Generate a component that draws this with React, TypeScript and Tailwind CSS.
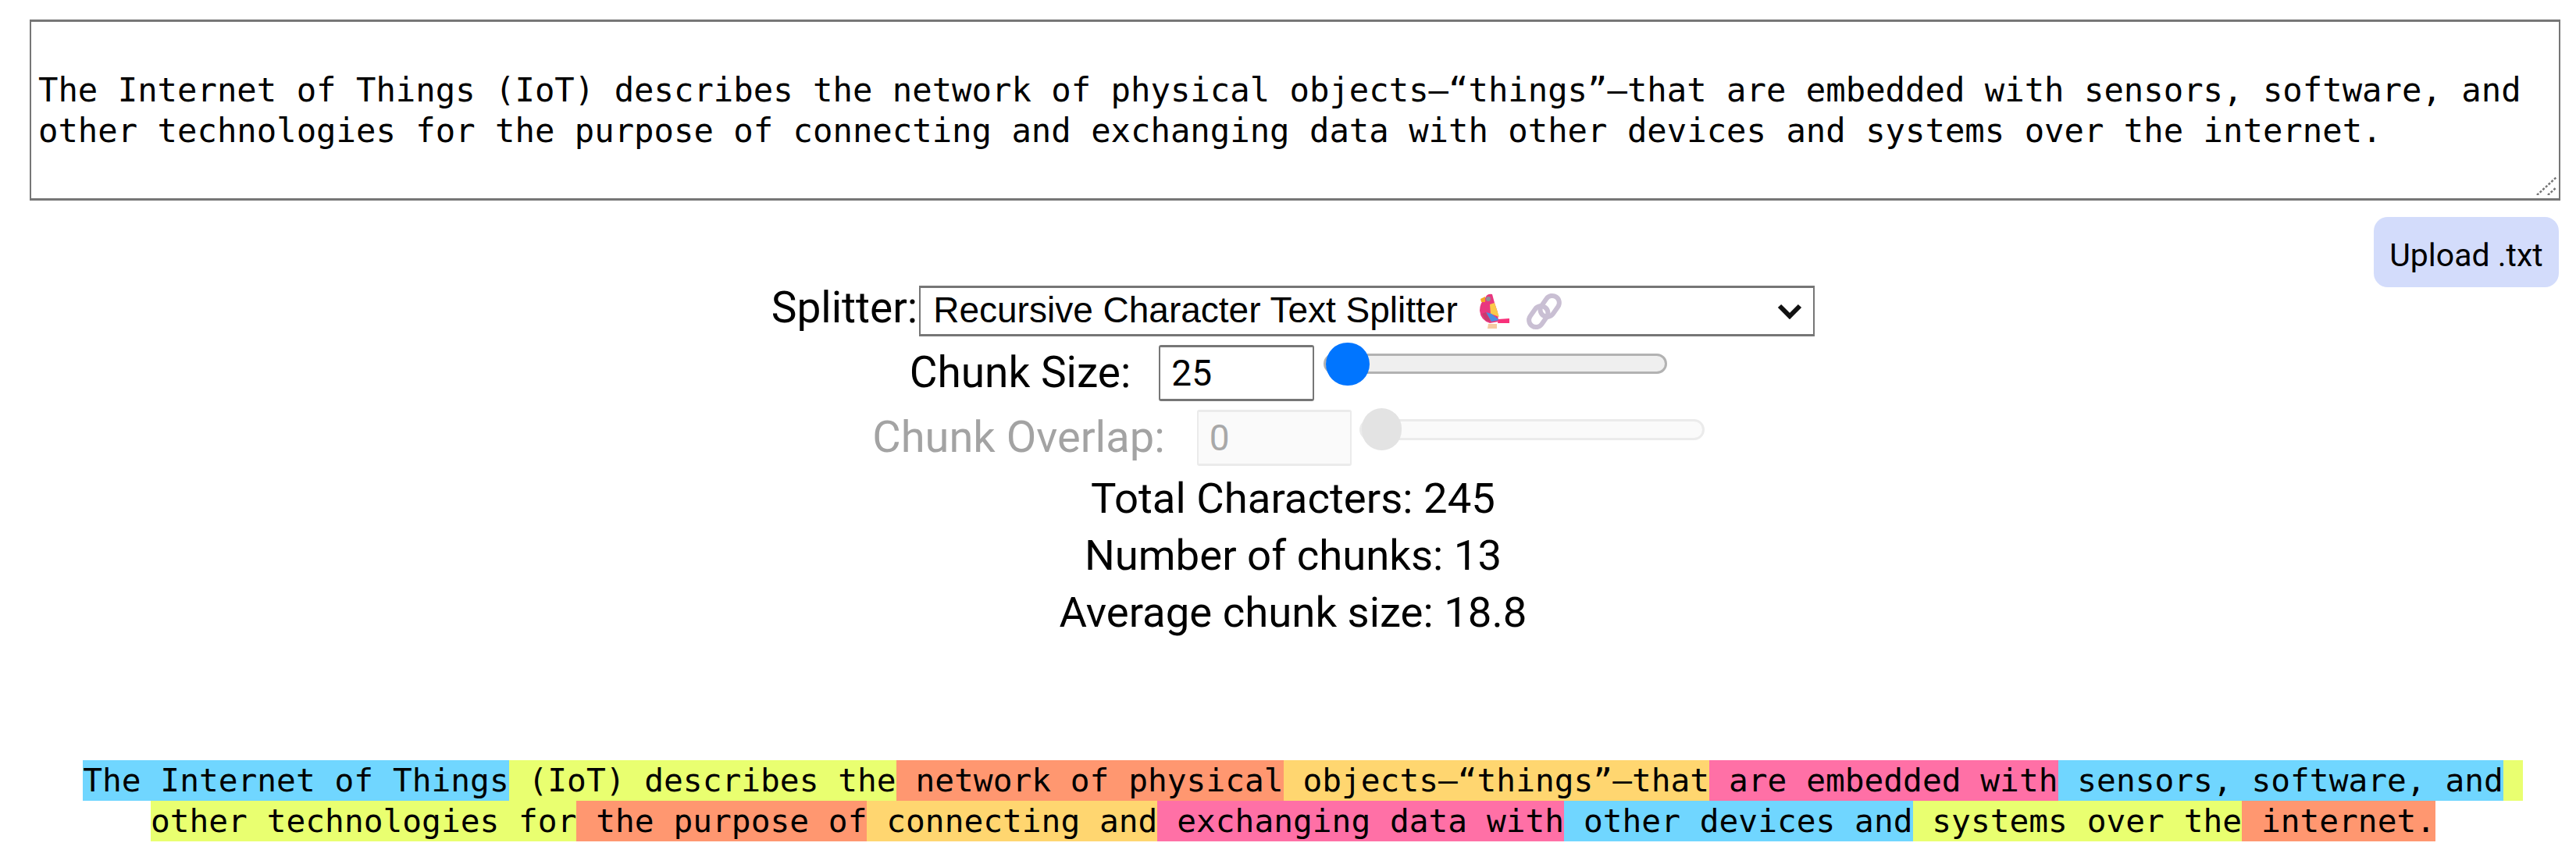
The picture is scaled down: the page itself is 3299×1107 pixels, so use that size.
const text =
  "The Internet of Things (IoT) describes the network of physical objects—“things”—that are embedded with sensors, software, and other technologies for the purpose of connecting and exchanging data with other devices and systems over the internet.";

const chunks: { text: string; color: string }[] = [
  { text: "The Internet of Things", color: "bg-[#70d6ff]" },
  { text: " (IoT) describes the", color: "bg-[#e9ff70]" },
  { text: " network of physical", color: "bg-[#ff9770]" },
  { text: " objects—“things”—that", color: "bg-[#ffd670]" },
  { text: " are embedded with", color: "bg-[#ff70a6]" },
  { text: " sensors, software, and", color: "bg-[#70d6ff]" },
  { text: " other technologies for", color: "bg-[#e9ff70]" },
  { text: " the purpose of", color: "bg-[#ff9770]" },
  { text: " connecting and", color: "bg-[#ffd670]" },
  { text: " exchanging data with", color: "bg-[#ff70a6]" },
  { text: " other devices and", color: "bg-[#70d6ff]" },
  { text: " systems over the", color: "bg-[#e9ff70]" },
  { text: " internet.", color: "bg-[#ff9770]" },
];

function Parrot() {
  return (
    <svg width="39" height="45" viewBox="0 0 39 45" className="ml-[27px] shrink-0">
      <path d="M8 6 Q10 0 17 1 L20 12 L24 24 L25 36 L14 38 Q2 34 1 22 Q1 12 8 6Z" fill="#e8377f" />
      <path d="M2 7 L8 4 L8 11 L3 11Z" fill="#f5a623" />
      <circle cx="12" cy="7" r="3" fill="#8f8f98" />
      <path d="M14 14 L20 12 L26 30 L15 26Z" fill="#fbc94a" />
      <path d="M9 24 L16 26 L26 34 L16 36Z" fill="#4a8fe0" />
      <path d="M4 26 L9 24 L15 36 L8 34Z" fill="#c93a6f" />
      <path d="M25 33 L39 32 L39 38 L24 38Z" fill="#f8317a" />
      <path d="M12 39 L23 39 L23 45 L11 45Z" fill="#f6c9a0" />
    </svg>
  );
}

function LinkEmoji() {
  return (
    <svg width="47" height="48" viewBox="0 0 47 48" fill="none" className="ml-[21px] shrink-0">
      <g stroke="#c9bfd3" strokeWidth="6">
        <rect x="22" y="3" width="18" height="29" rx="9" transform="rotate(35 31 17)" />
        <rect x="7" y="16" width="18" height="29" rx="9" transform="rotate(35 16 31)" />
      </g>
    </svg>
  );
}

function App() {
  const sans = "font-['Roboto',sans-serif]";
  return (
    <div className={`min-h-[1107px] bg-white pl-[33px] pr-[20px] pt-[25px] text-black ${sans}`}>
      <div className="relative ml-[5px]">
        <textarea
          readOnly
          defaultValue={text}
          className="block h-[232px] w-full resize-none border-x-2 border-y-[3px] border-[#767676] bg-white pl-[9px] pr-[9px] pt-[62px] font-['DejaVu_Sans_Mono',monospace] text-[42.25px] leading-[52px] text-black outline-none"
        />
        <svg width="26" height="24" viewBox="0 0 26 24" className="absolute bottom-[7px] right-[5px]">
          <path d="M1 24 L26 1 M15 24 L26 14" stroke="#767676" strokeWidth="2.5" strokeDasharray="3 2" />
        </svg>
      </div>

      <div className="mt-[21px] flex justify-end pr-[2px]">
        <button className="flex h-[90px] w-[237px] items-center justify-center rounded-[18px] bg-[#d3dcfb] pt-[8px] text-[41px] leading-none text-black">
          Upload .txt
        </button>
      </div>

      <div className="flex flex-col items-center">
        <div className="-mt-[2px] flex h-[65px] items-center">
          <label className="pb-[8px] text-[55px] leading-none">Splitter:</label>
          <div className="ml-[2px] flex h-[65px] w-[1147px] items-center border-x-2 border-y-[3px] border-[#767676] bg-white pl-[16px] pr-[14px] font-['Liberation_Sans',sans-serif] text-[46px]">
            <span className="pb-[2px]">Recursive Character Text Splitter</span>
            <Parrot />
            <LinkEmoji />
            <svg width="32" height="21" viewBox="0 0 32 21" fill="none" className="ml-auto">
              <path d="M3 4 L16 17 L29 4" stroke="#111" strokeWidth="6" />
            </svg>
          </div>
        </div>

        <div className="mt-[11px] flex h-[72px] items-center pr-[12px]">
          <label className="pb-[2px] text-[55px] leading-none">Chunk Size:</label>
          <input
            readOnly
            value="25"
            className="ml-[36px] h-[72px] w-[199px] rounded-[3px] border-x-2 border-y-[3px] border-[#767676] bg-white px-[14px] text-[46px] outline-none"
          />
          <input
            type="range"
            min={25}
            max={2000}
            defaultValue={25}
            className="ml-[12px] h-[72px] w-[440px] -translate-y-[12px] cursor-pointer appearance-none bg-transparent [&::-webkit-slider-runnable-track]:h-[26px] [&::-webkit-slider-runnable-track]:rounded-full [&::-webkit-slider-runnable-track]:border-[3px] [&::-webkit-slider-runnable-track]:border-[#b2b2b2] [&::-webkit-slider-runnable-track]:bg-[#efefef] [&::-webkit-slider-thumb]:-mt-[17.5px] [&::-webkit-slider-thumb]:h-[55px] [&::-webkit-slider-thumb]:w-[56px] [&::-webkit-slider-thumb]:appearance-none [&::-webkit-slider-thumb]:rounded-full [&::-webkit-slider-thumb]:bg-[#0075ff]"
          />
        </div>

        <div className="mt-[11px] flex h-[72px] items-center pr-[12px] text-[#a3a3a3]">
          <label className="pb-[2px] text-[56px] leading-none">Chunk Overlap:</label>
          <input
            disabled
            value="0"
            className="ml-[41px] h-[72px] w-[198px] rounded-[3px] border-x-2 border-y-[3px] border-[#ebebeb] bg-[#fafafa] px-[14px] text-[46px] text-[#a8a8a8] outline-none"
          />
          <input
            disabled
            type="range"
            min={0}
            max={25}
            defaultValue={0}
            className="ml-[10px] h-[72px] w-[442px] -translate-y-[11px] appearance-none bg-transparent [&::-webkit-slider-runnable-track]:h-[27px] [&::-webkit-slider-runnable-track]:rounded-full [&::-webkit-slider-runnable-track]:border-[3px] [&::-webkit-slider-runnable-track]:border-[#ebebeb] [&::-webkit-slider-runnable-track]:bg-[#fafafa] [&::-webkit-slider-thumb]:-mt-[16.5px] [&::-webkit-slider-thumb]:h-[54px] [&::-webkit-slider-thumb]:w-[51px] [&::-webkit-slider-thumb]:appearance-none [&::-webkit-slider-thumb]:rounded-full [&::-webkit-slider-thumb]:bg-[#e3e3e3]"
          />
        </div>

        <div className="mt-[5px] text-center text-[54.5px] leading-[73px]">
          <p>Total Characters: 245</p>
          <p>Number of chunks: 13</p>
          <p>Average chunk size: 18.8</p>
        </div>
      </div>

      <div className="mt-[153px] whitespace-pre-wrap text-center font-['DejaVu_Sans_Mono',monospace] text-[41.2px] leading-[52px]">
        {chunks.map((chunk) => (
          <span key={chunk.text} className={`py-[2px] ${chunk.color}`}>
            {chunk.text}
          </span>
        ))}
      </div>
    </div>
  );
}

export default App;
